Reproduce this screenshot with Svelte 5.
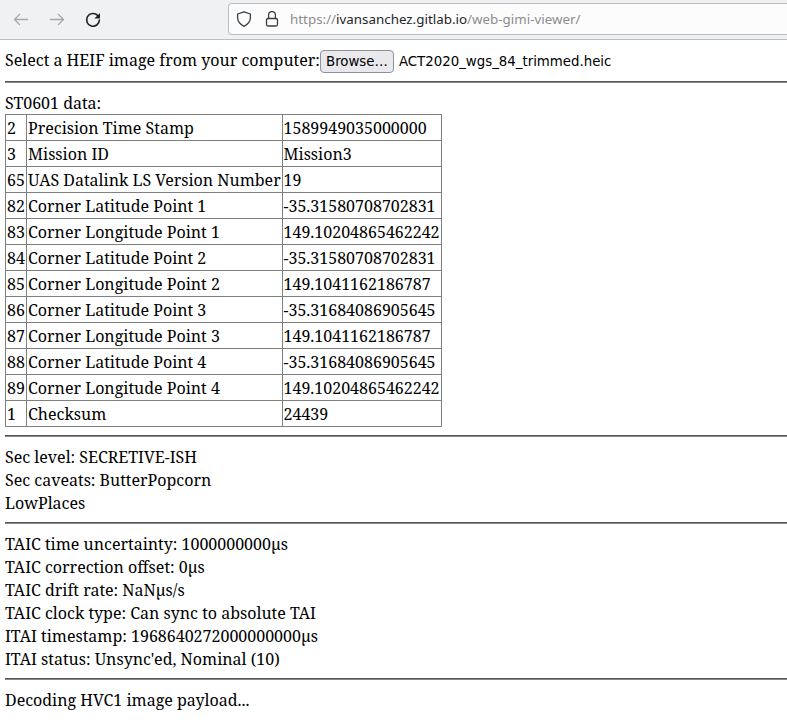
<script>
  const rows = [
    ['2', 'Precision Time Stamp', '1589949035000000'],
    ['3', 'Mission ID', 'Mission3'],
    ['65', 'UAS Datalink LS Version Number', '19'],
    ['82', 'Corner Latitude Point 1', '-35.31580708702831'],
    ['83', 'Corner Longitude Point 1', '149.10204865462242'],
    ['84', 'Corner Latitude Point 2', '-35.31580708702831'],
    ['85', 'Corner Longitude Point 2', '149.1041162186787'],
    ['86', 'Corner Latitude Point 3', '-35.31684086905645'],
    ['87', 'Corner Longitude Point 3', '149.1041162186787'],
    ['88', 'Corner Latitude Point 4', '-35.31684086905645'],
    ['89', 'Corner Longitude Point 4', '149.10204865462242'],
    ['1', 'Checksum', '24439'],
  ];
  const security = ['Sec level: SECRETIVE-ISH', 'Sec caveats: ButterPopcorn', 'LowPlaces'];
  const timing = [
    'TAIC time uncertainty: 1000000000µs',
    'TAIC correction offset: 0µs',
    'TAIC drift rate: NaNµs/s',
    'TAIC clock type: Can sync to absolute TAI',
    'ITAI timestamp: 1968640272000000000µs',
    "ITAI status: Unsync'ed, Nominal (10)",
  ];
</script>

<div class="window">
  <header class="toolbar">
    <nav>
      <svg class="off" width="16" height="16" viewBox="0 0 16 16"><path d="M14.500 7.500H1.500M6.500 2.500l-5 5 5 5" /></svg>
      <svg class="off" width="16" height="16" viewBox="0 0 16 16"><path d="M1.500 7.500H14.500M9.500 2.500l5 5-5 5" /></svg>
      <svg class="reload" width="16" height="16" viewBox="0 0 16 16"><path d="M12.6 3.4A6.4 6.4 0 1 0 14.4 8" /><path class="fill" d="M15 1v5.4H9.4z" /></svg>
    </nav>
    <div class="urlbar">
      <svg width="16" height="16" viewBox="0 0 16 16"><path d="M8 .8 14.4 3v3.5c0 3.8-2.7 7-6.400 8.800C4.300 13.500 1.600 10.300 1.600 6.500V3z" /></svg>
      <svg class="lock" width="16" height="16" viewBox="0 0 16 16"><rect x="2.500" y="7.500" width="11" height="7.500" rx="1.500" /><path d="M4.600 7.500V4a3.400 3.400 0 0 1 6.800 0v3.500" /></svg>
      <span class="url">https://<b>ivansanchez.gitlab.io</b>/web-gimi-viewer/</span>
    </div>
  </header>

  <main>
    <div class="picker">
      <span>Select a HEIF image from your computer:</span>
      <button>Browse…</button>
      <span class="file">ACT2020_wgs_84_trimmed.heic</span>
    </div>
    <hr />
    <div class="line">ST0601 data:</div>
    <table>
      <tbody>
        {#each rows as [tag, name, value]}
          <tr><td>{tag}</td><td>{name}</td><td>{value}</td></tr>
        {/each}
      </tbody>
    </table>
    <hr />
    {#each security as text}
      <div class="line">{text}</div>
    {/each}
    <hr />
    {#each timing as text}
      <div class="line">{text}</div>
    {/each}
    <hr />
    <div class="line">Decoding HVC1 image payload...</div>
  </main>
</div>

<style>
  .window {
    height: 720px;
    overflow: hidden;
    background: #fff;
    color: #000;
    font: 16px/23px "Noto Serif", "DejaVu Serif Condensed", "DejaVu Serif", serif;
  }
  .toolbar {
    box-sizing: border-box;
    height: 40px;
    display: flex;
    align-items: flex-start;
    background: #f0f1f3;
    border-bottom: 1px solid #bbbec0;
    overflow: hidden;
  }
  nav {
    display: flex;
    gap: 20px;
    padding: 12px 0 0 13px;
    width: 215px;
    flex: none;
  }
  svg {
    flex: none;
    fill: none;
    stroke: #3b3d40;
    stroke-width: 1.3;
    stroke-linecap: round;
    stroke-linejoin: round;
  }
  .off { stroke: #a7a8aa; }
  .reload { stroke: #202225; stroke-width: 1.6; }
  .reload .fill { fill: #202225; stroke: none; }
  .urlbar {
    box-sizing: border-box;
    flex: 1;
    height: 32px;
    margin-top: 3px;
    display: flex;
    align-items: center;
    padding-left: 7px;
    background: #fcfcfc;
    border: 1px solid #bbbec0;
    border-right: none;
    border-radius: 4px 0 0 4px;
  }
  .lock { margin-left: 12px; }
  .url {
    margin-left: 10px;
    font: 13.333px/20px "Noto Sans", sans-serif;
    letter-spacing: 0.02px;
    color: #8b8d8e;
    white-space: nowrap;
  }
  .url b { font-weight: 400; color: #232629; }
  main { padding-left: 5px; white-space: nowrap; }
  .picker {
    display: flex;
    align-items: center;
    height: 41px;
  }
  button {
    box-sizing: border-box;
    width: 74px;
    height: 23px;
    padding: 1px 0 0;
    border: 1px solid #8f8f9d;
    border-radius: 4px;
    background: #e9e9ed;
    color: #000;
    font: 13.333px/20px "DejaVu Sans", sans-serif;
  }
  .picker button { margin-top: 1px; }
  .file {
    margin-left: 5px;
    padding-top: 2px;
    font: 13.333px/20px "DejaVu Sans", sans-serif;
  }
  hr {
    height: 2px;
    margin: 0 0 9px;
    border: none;
    background: linear-gradient(#555 50%, #888 50%);
  }
  .line { height: 23px; }
  .line + hr { margin-top: 7px; }
  table {
    border-collapse: collapse;
    table-layout: fixed;
    width: 437px;
    margin: -1px 0 8px;
  }
  td {
    box-sizing: border-box;
    height: 26px;
    padding: 2px 1px 0;
    border: 1px solid gray;
    overflow: visible;
  }
  td:nth-child(1) { width: 21px; }
  td:nth-child(2) { width: 256px; }
  td:nth-child(3) { padding-left: 0.5px; }
</style>
